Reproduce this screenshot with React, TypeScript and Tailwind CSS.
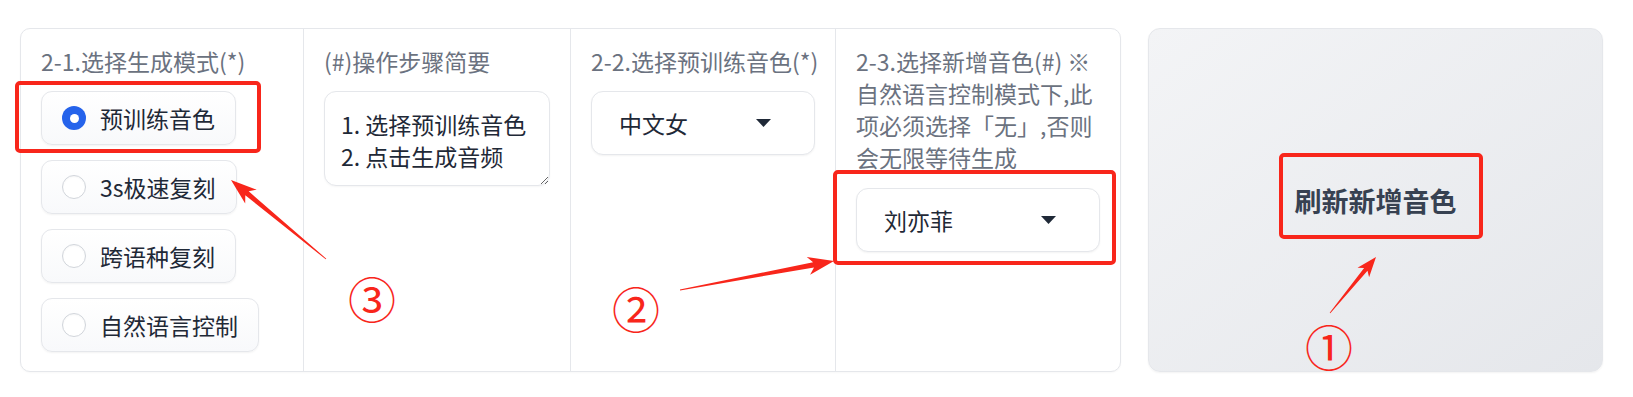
import React from "react";

const RED = "#f8261b";

function arrowPoints(
  x1: number,
  y1: number,
  x2: number,
  y2: number,
  headLen: number,
  headHalf: number,
  shaftHalf: number
) {
  const dx = x2 - x1;
  const dy = y2 - y1;
  const len = Math.hypot(dx, dy);
  const ux = dx / len;
  const uy = dy / len;
  const nx = -uy;
  const ny = ux;
  const bx = x2 - ux * headLen;
  const by = y2 - uy * headLen;
  const bx2 = x2 - ux * (headLen * 0.8);
  const by2 = y2 - uy * (headLen * 0.8);
  const pts: [number, number][] = [
    [x1 + nx * 0.4, y1 + ny * 0.4],
    [bx2 + nx * shaftHalf, by2 + ny * shaftHalf],
    [bx + nx * headHalf, by + ny * headHalf],
    [x2, y2],
    [bx - nx * headHalf, by - ny * headHalf],
    [bx2 - nx * shaftHalf, by2 - ny * shaftHalf],
    [x1 - nx * 0.4, y1 - ny * 0.4],
  ];
  return pts.map((p) => `${p[0].toFixed(1)},${p[1].toFixed(1)}`).join(" ");
}

function Radio({ label, checked }: { label: string; checked?: boolean }) {
  return (
    <div className="inline-flex items-center h-[54px] px-5 gap-[14px] border border-[#e5e7eb] rounded-[11px] bg-gradient-to-b from-white to-[#f8f9fb] shadow-[0_1px_2px_rgba(0,0,0,0.05)]">
      {checked ? (
        <span className="w-[24px] h-[24px] rounded-full bg-[#2563eb] flex items-center justify-center">
          <span className="w-[9px] h-[9px] rounded-full bg-white" />
        </span>
      ) : (
        <span className="w-[24px] h-[24px] rounded-full border border-[#d1d5db] bg-white shadow-[inset_0_1px_2px_rgba(0,0,0,0.04)]" />
      )}
      <span className="text-[23px] leading-[26px] text-[#1f2937]">{label}</span>
    </div>
  );
}

function Dropdown({ value, className }: { value: string; className?: string }) {
  return (
    <div
      className={
        "h-[64px] rounded-[12px] border border-[#e5e7eb] bg-white shadow-[0_1px_2px_rgba(0,0,0,0.05)] flex items-center justify-between pl-[27px] pr-[43px] " +
        (className ?? "")
      }
    >
      <span className="text-[23px] leading-[30px] text-[#1f2937]">{value}</span>
      <svg width="15" height="8" viewBox="0 0 15 8">
        <polygon points="0,0 15,0 7.5,8" fill="#1f2937" />
      </svg>
    </div>
  );
}

export default function App() {
  return (
    <div className="relative w-[1633px] h-[397px] bg-white overflow-hidden font-['Noto_Sans_CJK_SC','Noto_Sans',sans-serif]">
      <div className="flex items-start pl-[20px] pt-[28px] gap-[27px]">
        {/* Card */}
        <div className="w-[1101px] h-[344px] border border-[#e5e7eb] rounded-[10px] bg-white flex shadow-[0_1px_2px_rgba(0,0,0,0.03)]">
          {/* col 1 */}
          <div className="w-[282px] px-5 pt-4 flex flex-col">
            <div className="text-[23px] leading-[32px] text-[#6b7280] whitespace-nowrap">
              2-1.选择生成模式(*)
            </div>
            <div className="mt-[14px] flex flex-col items-start gap-[15px]">
              <Radio label="预训练音色" checked />
              <Radio label="3s极速复刻" />
              <Radio label="跨语种复刻" />
              <Radio label="自然语言控制" />
            </div>
          </div>
          {/* col 2 */}
          <div className="w-[267px] border-l border-[#e5e7eb] px-5 pt-4 flex flex-col">
            <div className="text-[23px] leading-[32px] text-[#6b7280] whitespace-nowrap">
              (#)操作步骤简要
            </div>
            <textarea
              readOnly
              defaultValue={"1. 选择预训练音色\n2. 点击生成音频"}
              className="mt-[14px] h-[95px] w-full rounded-[12px] border border-[#e5e7eb] bg-white shadow-[0_1px_2px_rgba(0,0,0,0.04)] pl-[16px] pr-2 pt-[16px] pb-2 text-[23px] leading-[32px] text-[#1f2937] overflow-hidden outline-none font-['Noto_Sans_CJK_SC','Noto_Sans',sans-serif]"
            />
          </div>
          {/* col 3 */}
          <div className="w-[265px] border-l border-[#e5e7eb] px-5 pt-4 flex flex-col">
            <div className="text-[23px] leading-[32px] text-[#6b7280] whitespace-nowrap">
              2-2.选择预训练音色(*)
            </div>
            <Dropdown value="中文女" className="mt-[14px]" />
          </div>
          {/* col 4 */}
          <div className="flex-1 border-l border-[#e5e7eb] px-5 pt-4 flex flex-col">
            <div className="text-[23px] leading-[32px] text-[#6b7280]">
              2-3.选择新增音色(#) ※自然语言控制模式下,此项必须选择「无」,否则会无限等待生成
            </div>
            <Dropdown value="刘亦菲" className="mt-[15px]" />
          </div>
        </div>
        {/* Button */}
        <div className="w-[455px] h-[344px] rounded-[12px] border border-[#e5e7eb] bg-gradient-to-br from-[#f3f4f6] to-[#e5e7eb] shadow-[0_1px_2px_rgba(0,0,0,0.05)] flex items-center justify-center">
          <span className="text-[27px] font-bold text-[#374151] pt-[2px]">刷新新增音色</span>
        </div>
      </div>

      {/* Annotation overlay */}
      <svg
        className="absolute inset-0 pointer-events-none"
        width="1633"
        height="397"
        viewBox="0 0 1633 397"
      >
        <rect x="17" y="83" width="242" height="68" rx="3" fill="none" stroke={RED} strokeWidth="4" />
        <rect x="835" y="172" width="279" height="91" rx="3" fill="none" stroke={RED} strokeWidth="4" />
        <rect x="1281" y="155" width="200" height="82" rx="3" fill="none" stroke={RED} strokeWidth="4" />

        <polygon points={arrowPoints(326, 259, 231, 180, 26, 9, 2.6)} fill={RED} />
        <polygon points={arrowPoints(680, 290, 834, 261, 26, 9, 2.6)} fill={RED} />
        <polygon points={arrowPoints(1330, 313, 1376, 257, 20, 7.5, 2.2)} fill={RED} />

        <text
          x="372"
          y="318"
          textAnchor="middle"
          fontSize="48"
          fill={RED}
          fontFamily="'Noto Sans CJK SC', sans-serif"
        >
          ③
        </text>
        <text
          x="636"
          y="328"
          textAnchor="middle"
          fontSize="48"
          fill={RED}
          fontFamily="'Noto Sans CJK SC', sans-serif"
        >
          ②
        </text>
        <text
          x="1329"
          y="366"
          textAnchor="middle"
          fontSize="48"
          fill={RED}
          fontFamily="'Noto Sans CJK SC', sans-serif"
        >
          ①
        </text>
      </svg>
    </div>
  );
}
